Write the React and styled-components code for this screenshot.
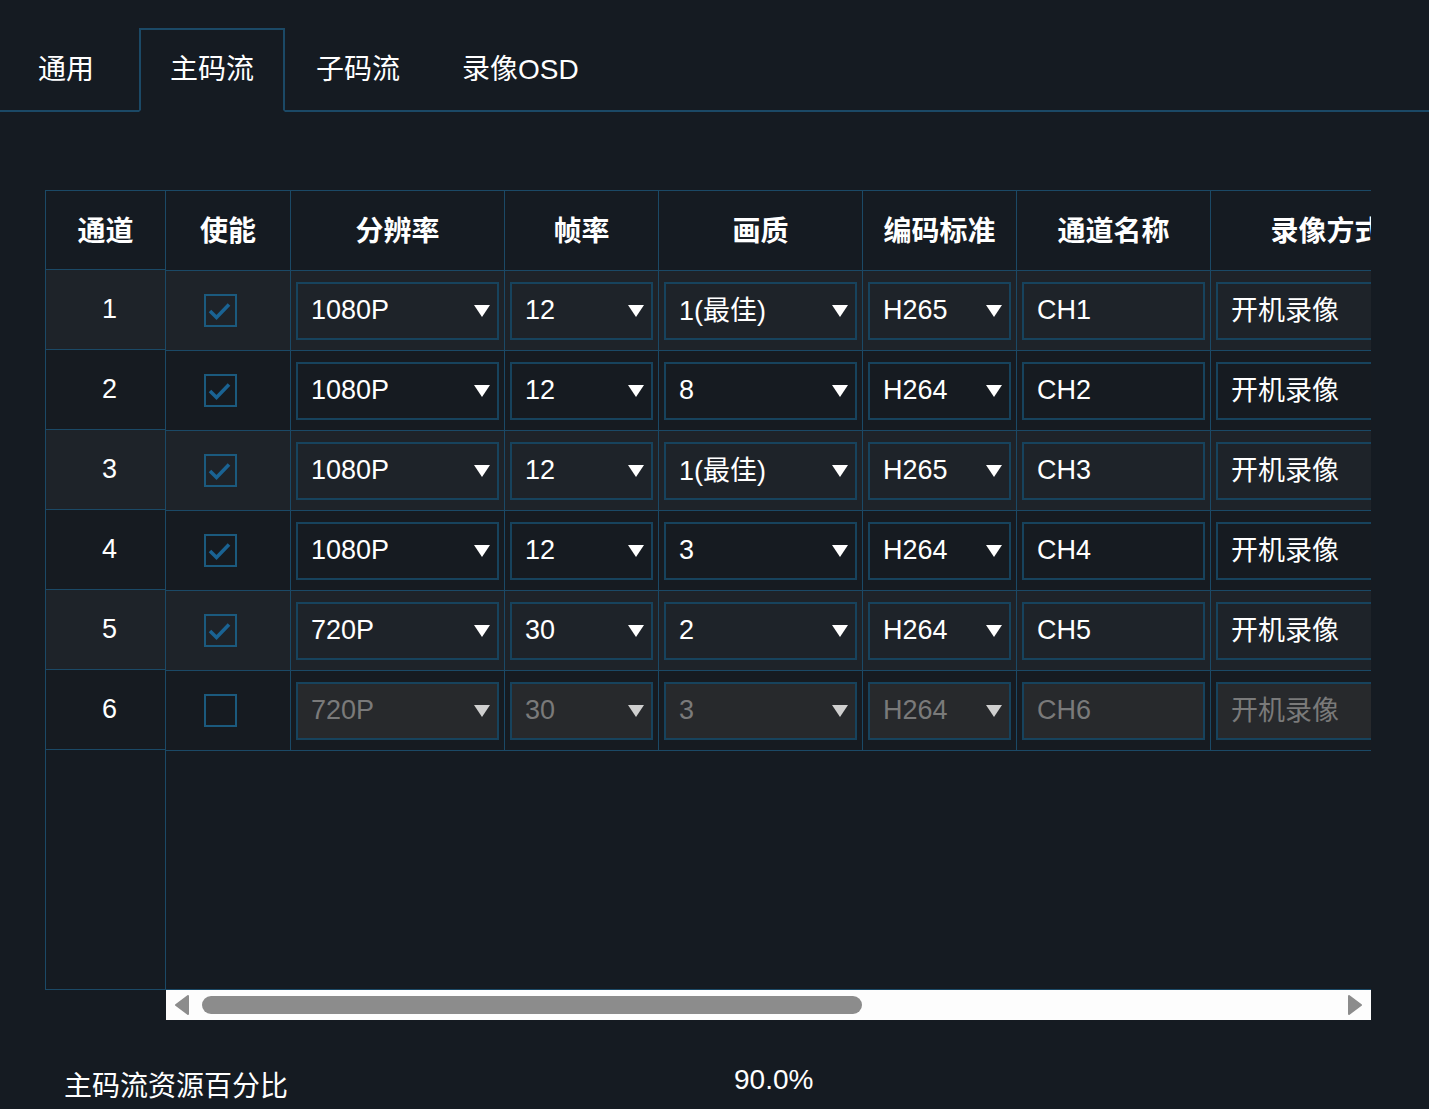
import React from "react";
import styled, { createGlobalStyle } from "styled-components";

const LINE = "#1b4966";
const BG = "#151b22";
const ROW_LIGHT = "#1e2329";
const ROW_DARK = "#161b21";
const FONT = `"Liberation Sans", "Noto Sans CJK SC", sans-serif`;

const Global = createGlobalStyle`
  html, body { margin: 0; padding: 0; background: ${BG}; }
  body { font-family: ${FONT}; color: #fff; overflow: hidden; }
  * { box-sizing: border-box; }
`;

const Page = styled.div`
  width: 1429px;
  height: 1109px;
  background: ${BG};
  overflow: hidden;
  display: flex;
  flex-direction: column;
`;

const TabBar = styled.div`
  padding-top: 28px;
  border-bottom: 2px solid ${LINE};
  display: flex;
`;

const TabList = styled.div`
  display: flex;
  margin-left: -7px;
  margin-bottom: -2px;
`;

const Tab = styled.div`
  min-width: 146px;
  height: 84px;
  padding: 0 29px 6px;
  display: flex;
  align-items: center;
  justify-content: center;
  font-size: 28px;
  color: #fff;
  border: 2px solid ${(p) => (p.$active ? LINE : "transparent")};
  border-bottom: 2px solid ${(p) => (p.$active ? BG : "transparent")};
  background: ${(p) => (p.$active ? BG : "transparent")};
`;

const TableSection = styled.div`
  display: flex;
  margin: 78px 0 0 45px;
  width: 1325px;
`;

const FixedColumn = styled.div`
  width: 121px;
  height: 800px;
  flex: none;
  display: flex;
  flex-direction: column;
  border: 1px solid ${LINE};
`;

const HeadText = styled.div`
  height: ${(p) => (p.$grid ? 80 : 79)}px;
  flex: none;
  display: flex;
  align-items: center;
  justify-content: center;
  padding-bottom: 3px;
  font-size: 28px;
  font-weight: 700;
  border-bottom: 1px solid ${LINE};
  border-right: ${(p) => (p.$grid ? `1px solid ${LINE}` : "none")};
`;

const IndexCell = styled.div`
  height: 80px;
  flex: none;
  display: flex;
  align-items: center;
  justify-content: center;
  padding-left: 8px;
  font-size: 27px;
  background: ${(p) => (p.$light ? ROW_LIGHT : ROW_DARK)};
  border-bottom: 1px solid ${LINE};
`;

const Filler = styled.div`
  flex: 1;
`;

const ScrollArea = styled.div`
  width: 1205px;
  flex: none;
  display: flex;
  flex-direction: column;
`;

const Viewport = styled.div`
  height: 800px;
  overflow: hidden;
  border-top: 1px solid ${LINE};
  border-bottom: 1px solid ${LINE};
`;

const Grid = styled.div`
  display: grid;
  grid-template-columns: 125px 214px 154px 204px 154px 194px 232px 200px;
  grid-auto-rows: 80px;
  width: max-content;
`;

const Cell = styled.div`
  display: flex;
  align-items: center;
  justify-content: ${(p) => (p.$center ? "center" : "stretch")};
  padding: 0 5px;
  background: ${(p) => (p.$light ? ROW_LIGHT : ROW_DARK)};
  border-right: 1px solid ${LINE};
  border-bottom: 1px solid ${LINE};
`;

const Check = styled.div`
  width: 33px;
  height: 33px;
  margin-right: 16px;
  border: 2px solid #1b5a7e;
  display: flex;
  align-items: center;
  justify-content: center;
`;

const Field = styled.div`
  width: 100%;
  height: 58px;
  border: 2px solid #17435d;
  background: ${(p) => (p.$disabled ? "#27292c" : "transparent")};
  color: ${(p) => (p.$disabled ? "#7a7a7a" : "#fff")};
  font-size: 27px;
  display: flex;
  align-items: center;
  justify-content: space-between;
  padding: 0 7px 0 13px;
  white-space: nowrap;
  overflow: hidden;
`;

const FieldText = styled.span`
  position: relative;
  top: ${(p) => (p.$cjk ? -2 : 0)}px;
`;

const Arrow = styled.svg`
  width: 16px;
  height: 12px;
  flex: none;
`;

const Scrollbar = styled.div`
  height: 30px;
  background: #fdfdfd;
  display: flex;
  align-items: center;
  padding: 0 8px;
  gap: 12px;
`;

const Thumb = styled.div`
  width: 660px;
  height: 18px;
  border-radius: 9px;
  background: #8c8c8c;
`;

const Track = styled.div`
  flex: 1;
  display: flex;
  align-items: center;
`;

const ScrollBtn = styled.svg`
  width: 16px;
  height: 20px;
  flex: none;
`;

const Summary = styled.div`
  display: flex;
  align-items: center;
  margin: 36px 0 0 64px;
`;

const SummaryLabel = styled.div`
  width: 670px;
  font-size: 28px;
  padding-top: 8px;
`;

const SummaryValue = styled.div`
  font-size: 28px;
`;

const DownArrow = ({ disabled }) => (
  <Arrow viewBox="0 0 16 12">
    <polygon points="0,0 16,0 8,12" fill={disabled ? "#cfcfcf" : "#fff"} />
  </Arrow>
);

const hasCjk = (s) => /[\u4e00-\u9fff]/.test(s);

const Select = ({ value, disabled }) => (
  <Field $disabled={disabled}>
    <FieldText $cjk={hasCjk(value)}>{value}</FieldText>
    <DownArrow disabled={disabled} />
  </Field>
);

const Input = ({ value, disabled }) => (
  <Field $disabled={disabled}>
    <FieldText $cjk={hasCjk(value)}>{value}</FieldText>
  </Field>
);

const CheckBox = ({ checked }) => (
  <Check>
    {checked && (
      <svg width="24" height="20" viewBox="0 0 24 20">
        <polyline
          points="2,10 8.5,16.5 21,3.5"
          fill="none"
          stroke="#1a6393"
          strokeWidth="3.6"
        />
      </svg>
    )}
  </Check>
);

const rows = [
  { on: true, res: "1080P", fps: "12", q: "1(最佳)", enc: "H265", name: "CH1" },
  { on: true, res: "1080P", fps: "12", q: "8", enc: "H264", name: "CH2" },
  { on: true, res: "1080P", fps: "12", q: "1(最佳)", enc: "H265", name: "CH3" },
  { on: true, res: "1080P", fps: "12", q: "3", enc: "H264", name: "CH4" },
  { on: true, res: "720P", fps: "30", q: "2", enc: "H264", name: "CH5" },
  { on: false, res: "720P", fps: "30", q: "3", enc: "H264", name: "CH6" },
];

const headers = ["使能", "分辨率", "帧率", "画质", "编码标准", "通道名称", "录像方式", "音频"];

export default function App() {
  return (
    <Page>
      <Global />
      <TabBar>
        <TabList>
          <Tab>通用</Tab>
          <Tab $active>主码流</Tab>
          <Tab>子码流</Tab>
          <Tab>录像OSD</Tab>
        </TabList>
      </TabBar>

      <TableSection>
        <FixedColumn>
          <HeadText>通道</HeadText>
          {rows.map((r, i) => (
            <IndexCell key={i} $light={i % 2 === 0}>
              {i + 1}
            </IndexCell>
          ))}
          <Filler />
        </FixedColumn>

        <ScrollArea>
          <Viewport>
            <Grid>
              {headers.map((h) => (
                <HeadText key={h} $grid>
                  {h}
                </HeadText>
              ))}
              {rows.map((r, i) => {
                const light = i % 2 === 0;
                const dis = !r.on;
                return (
                  <React.Fragment key={i}>
                    <Cell $light={light} $center>
                      <CheckBox checked={r.on} />
                    </Cell>
                    <Cell $light={light}>
                      <Select value={r.res} disabled={dis} />
                    </Cell>
                    <Cell $light={light}>
                      <Select value={r.fps} disabled={dis} />
                    </Cell>
                    <Cell $light={light}>
                      <Select value={r.q} disabled={dis} />
                    </Cell>
                    <Cell $light={light}>
                      <Select value={r.enc} disabled={dis} />
                    </Cell>
                    <Cell $light={light}>
                      <Input value={r.name} disabled={dis} />
                    </Cell>
                    <Cell $light={light}>
                      <Select value="开机录像" disabled={dis} />
                    </Cell>
                    <Cell $light={light}>
                      <Select value="关闭" disabled={dis} />
                    </Cell>
                  </React.Fragment>
                );
              })}
            </Grid>
          </Viewport>
          <Scrollbar>
            <ScrollBtn viewBox="0 0 16 20">
              <polygon points="14,1 14,19 2,10" fill="#8c8c8c" stroke="#8c8c8c" strokeWidth="2" strokeLinejoin="round" />
            </ScrollBtn>
            <Track>
              <Thumb />
            </Track>
            <ScrollBtn viewBox="0 0 16 20">
              <polygon points="2,1 2,19 14,10" fill="#8c8c8c" stroke="#8c8c8c" strokeWidth="2" strokeLinejoin="round" />
            </ScrollBtn>
          </Scrollbar>
        </ScrollArea>
      </TableSection>

      <Summary>
        <SummaryLabel>主码流资源百分比</SummaryLabel>
        <SummaryValue>90.0%</SummaryValue>
      </Summary>
    </Page>
  );
}
